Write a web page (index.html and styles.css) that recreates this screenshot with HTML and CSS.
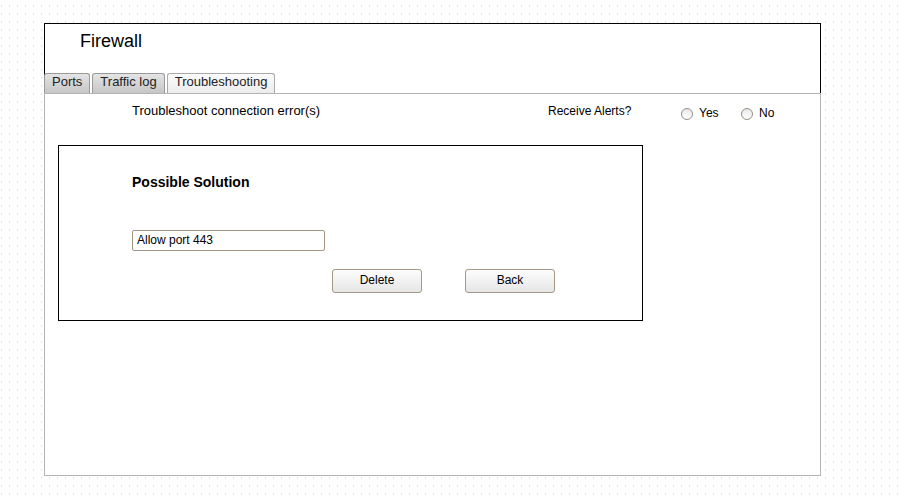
FILE: index.html
```html
<!DOCTYPE html>
<html>
<head>
<meta charset="utf-8">
<link rel="stylesheet" href="styles.css">
</head>
<body>
<div class="window">
  <div class="header">
    <div class="title">Firewall</div>
    <div class="tabs">
      <span class="tab">Ports</span>
      <span class="tab">Traffic log</span>
      <span class="tab active">Troubleshooting</span>
    </div>
  </div>
  <div class="panel">
    <div class="toprow">
      <span class="label">Troubleshoot connection error(s)</span>
      <span class="alerts">Receive Alerts?</span>
      <span class="opt"><span class="radio"></span><span class="rlabel yes">Yes</span></span>
      <span class="opt"><span class="radio"></span><span class="rlabel">No</span></span>
    </div>
    <div class="box">
      <div class="heading">Possible Solution</div>
      <div class="field">Allow port 443</div>
      <div class="buttons">
        <span class="btn">Delete</span>
        <span class="btn">Back</span>
      </div>
    </div>
  </div>
</div>
</body>
</html>
```
FILE: styles.css
```css
html, body {
  margin: 0;
  padding: 0;
}
body {
  width: 900px;
  height: 499px;
  overflow: hidden;
  font-family: "Liberation Sans", Arial, sans-serif;
  color: #000;
  background-color: #fff;
  background-image: url("data:image/svg+xml,%3Csvg xmlns='http://www.w3.org/2000/svg' width='8' height='8'%3E%3Crect x='1' y='5' width='1' height='2' fill='%23e4e4e4'/%3E%3C/svg%3E");
  background-size: 8px 8px;
}
.window {
  margin: 23px 0 0 44px;
  width: 777px;
}
.header {
  background: #fff;
  border: 1px solid #000;
  border-bottom: none;
  height: 69px;
  display: flex;
  flex-direction: column;
  justify-content: space-between;
}
.title {
  font-size: 18px;
  line-height: 20px;
  padding: 7px 0 0 35px;
}
.tabs {
  display: flex;
  gap: 2px;
  margin-left: -1px;
  height: 20px;
}
.tab {
  font-size: 13px;
  line-height: 16px;
  padding: 0 7px;
  border: 1px solid #9a9a9a;
  border-bottom: none;
  border-radius: 3px 3px 0 0;
  background: linear-gradient(#e4e4e4, #c6c6c6);
  color: #222;
}
.tab.active {
  background: linear-gradient(#fbfbfb, #ececec);
  border-color: #aaa;
}
.panel {
  background: #fff;
  border: 1px solid #b4b4b4;
  height: 381px;
}
.toprow {
  display: flex;
  align-items: flex-start;
  height: 34px;
  padding: 9px 0 0 87px;
  box-sizing: border-box;
  font-size: 13px;
  line-height: 16px;
}
.label {
  width: 416px;
}
.alerts {
  width: 133px;
  font-size: 12px;
}
.opt {
  display: flex;
  align-items: center;
  margin-top: 2px;
}
.radio {
  width: 10px;
  height: 10px;
  margin-top: 1px;
  border: 1px solid #958f86;
  border-radius: 50%;
  background: linear-gradient(#e8e8e8, #fff);
}
.rlabel {
  font-size: 12px;
  margin-left: 6px;
}
.rlabel.yes {
  width: 42px;
}
.box {
  margin: 17px 0 0 13px;
  width: 510px;
  height: 174px;
  border: 1px solid #000;
  padding-left: 73px;
}
.heading {
  font-size: 14px;
  font-weight: bold;
  line-height: 16px;
  padding-top: 28px;
}
.field {
  margin-top: 40px;
  width: 187px;
  height: 19px;
  border: 1px solid #a39886;
  border-radius: 2px;
  font-size: 12px;
  line-height: 18px;
  padding-left: 4px;
}
.buttons {
  display: flex;
  gap: 43px;
  margin: 18px 0 0 200px;
}
.btn {
  width: 88px;
  height: 22px;
  border: 1px solid #a39886;
  border-radius: 3px;
  background: linear-gradient(#fdfdfd, #e6e6e6);
  font-size: 12px;
  line-height: 21px;
  text-align: center;
}
```
